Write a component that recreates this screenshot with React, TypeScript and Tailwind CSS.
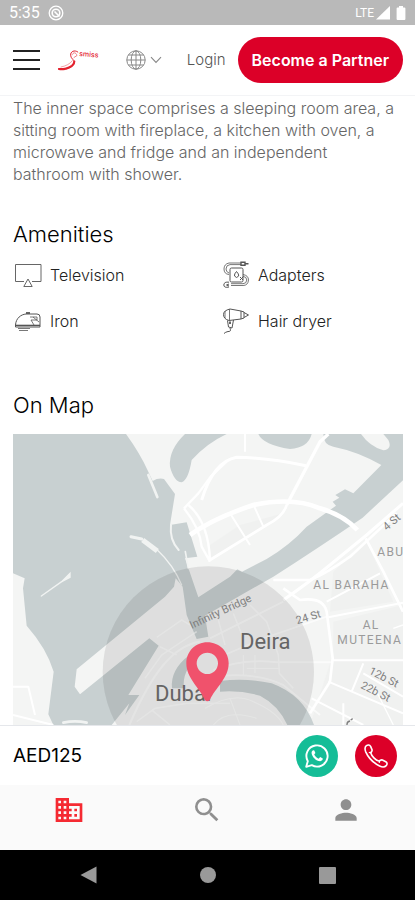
import type { ReactNode } from "react";
import { MdBusiness, MdPerson, MdSearch } from "react-icons/md";

const StatusBar = () => (
  <div className="flex h-[25px] items-center justify-between bg-[#b9b9b9] px-[9px] text-white">
    <div className="flex items-center gap-2">
      <span className="font-['Roboto'] text-base leading-6">5:35</span>
      <svg viewBox="0 0 16 16" className="h-4 w-4" fill="none" stroke="currentColor">
        <circle cx="8" cy="8" r="6.8" strokeWidth="1.3" />
        <circle cx="8" cy="8" r="3.8" strokeWidth="1.6" />
        <path d="M6.5 6.5 L11.5 11.5" strokeWidth="1.6" />
      </svg>
    </div>
    <div className="flex items-center gap-[2px]">
      <span className="font-['Roboto'] text-xs">LTE</span>
      <svg viewBox="0 0 14 14" className="h-[14px] w-[14px]" fill="currentColor">
        <path d="M14 0 V13.5 H0 Z" />
      </svg>
      <svg viewBox="0 0 10 14" className="ml-1 h-[14px] w-[10px]" fill="currentColor">
        <path d="M3 0 H7 V1.6 H8.4 Q9.4 1.6 9.4 2.6 V13 Q9.4 14 8.4 14 H1.6 Q.6 14 .6 13 V2.6 Q.6 1.6 1.6 1.6 H3 Z" />
      </svg>
    </div>
  </div>
);

const Logo = () => (
  <svg viewBox="0 0 42 24" className="h-6 w-[42px]" fill="none" stroke="#e3222f" strokeLinecap="round">
    <path d="M1.5 21 C8 22 17 19.5 17.5 14.5 C17.8 12 14 11 13.6 7.5 C13.2 3.5 17.5 1.5 20.8 4" strokeWidth="1" />
    <path d="M2 21 C9 22 17 18.5 17.3 13.5" strokeWidth="2.2" strokeDasharray="6 1" />
    <path d="M15 7 C16 4 19 4 20 7.5 L17 9.5" strokeWidth="0.8" opacity="0.7" />
    <path d="M4 19 C9 18 13 16 15.5 12.5" strokeWidth="0.7" opacity="0.6" />
    <text
      x="22"
      y="8"
      fill="#e3222f"
      stroke="none"
      fontFamily="Inter, sans-serif"
      fontSize="7"
      fontWeight="500"
      transform="rotate(5 22 8)"
    >
      smiss
    </text>
  </svg>
);

const Header = () => (
  <header className="flex h-[71px] items-center border-b border-gray-100 bg-white pl-[13px] pr-3">
    <button aria-label="Menu" className="flex w-[27px] flex-col gap-[7px]">
      <span className="h-[2px] w-full bg-[#222]" />
      <span className="h-[2px] w-full bg-[#222]" />
      <span className="h-[2px] w-full bg-[#222]" />
    </button>
    <a href="#" aria-label="Home" className="ml-[17px]">
      <Logo />
    </a>
    <button aria-label="Language" className="ml-[27px] flex items-center gap-1 text-[#888]">
      <svg viewBox="0 0 20 20" className="h-5 w-5" fill="none" stroke="currentColor" strokeWidth="1">
        <circle cx="10" cy="10" r="9.2" />
        <ellipse cx="10" cy="10" rx="4.8" ry="9.2" />
        <path d="M10 .8 V19.2 M.8 10 H19.2 M2.5 5 H17.5 M2.5 15 H17.5" />
      </svg>
      <svg viewBox="0 0 12 8" className="h-2 w-3" fill="none" stroke="currentColor" strokeWidth="1.1">
        <path d="M1 1.2 L6 6.4 L11 1.2" />
      </svg>
    </button>
    <a href="#" className="ml-auto text-[15px] font-light text-[#555]">
      Login
    </a>
    <button className="ml-3 h-[46px] rounded-full bg-[#dc0028] px-[14px] text-base font-semibold whitespace-nowrap text-white">
      Become a Partner
    </button>
  </header>
);

const TvIcon = () => (
  <svg viewBox="0 0 28 28" className="h-7 w-7" fill="none" stroke="#666" strokeWidth="1">
    <path d="M10 20.5 H1.5 V3.5 H27 V20.5 H18" />
    <path d="M14 18 L9.8 25.5 H18.2 Z" />
  </svg>
);

const IronIcon = () => (
  <svg viewBox="0 0 28 28" className="h-7 w-7" fill="none" stroke="#555" strokeWidth="1">
    <path d="M1.5 18 C2 11 7 7.5 12 7 H23 Q26 7 26 10 V20 H1.5 Z" />
    <path d="M1.5 18.4 H26" strokeWidth="1.4" />
    <path d="M12 6 H16" strokeWidth="1.8" />
    <path d="M16 10 H23 V13 H17 M17 13 L20 18 M19 10 L25 15" strokeWidth=".8" />
    <path d="M4 21.5 H16 M5 23.5 H14" strokeWidth=".8" />
  </svg>
);

const AdapterIcon = () => (
  <svg viewBox="0 0 28 28" className="h-7 w-7" fill="none" stroke="#555" strokeWidth="1">
    <rect x="8" y="7" width="13" height="14" rx="1.5" />
    <path d="M19 2 H7 Q2 3 2 8 Q2 13 7 13.5 M19 3.6 H8 Q4 4 4 8 Q4 11 7 12" strokeWidth=".8" />
    <path d="M19 1.3 H23 V4.2 H19 Z M23 2.7 H26.5" strokeWidth="1.4" />
    <path d="M14.5 10.5 Q12 13 12.5 15 Q14.5 18 16.7 15 Q17 13 14.5 10.5 Z" />
    <path d="M21 13.5 Q26.5 14.5 26.5 19 Q26 24.5 21 24.5 H9 M21 15.2 Q24.8 16 24.8 19 Q24.5 22.7 21 22.7 H9" strokeWidth=".8" />
    <path d="M7 21.2 Q2 20.5 1.8 24 Q2 27.2 7 26 M7 23 L4.5 24 L7 25" />
    <path d="M18 16 L21 19 M18 19 L21 16" />
  </svg>
);

const DryerIcon = () => (
  <svg viewBox="0 0 28 28" className="h-7 w-7" fill="none" stroke="#555" strokeWidth="1">
    <path d="M8 2 Q1.5 3.5 1.5 7.5 Q1.5 12 7 13.5 L19 12 V4 Z" />
    <path d="M7.5 2.2 V13.2 M3 4 V11" strokeWidth=".8" />
    <path d="M19 4 L22 5 V11 L19 12 M22 5.5 L26.5 8 L22 10.5" />
    <path d="M5.5 13.5 L6.5 20 L10 21 L11.5 13" />
    <path d="M8 14.5 V17" strokeWidth="1.8" />
    <path d="M8 21 Q9.5 25 6 24.5 Q3.5 25 2 26.5" />
  </svg>
);

const amenities: { label: string; icon: ReactNode }[] = [
  { label: "Television", icon: <TvIcon /> },
  { label: "Adapters", icon: <AdapterIcon /> },
  { label: "Iron", icon: <IronIcon /> },
  { label: "Hair dryer", icon: <DryerIcon /> },
];

const LocationMap = () => (
  <svg
    viewBox="39 27 1170 873"
    preserveAspectRatio="xMidYMin slice"
    className="block h-[291px] w-full font-['Roboto']"
    role="img"
    aria-label="Map of Dubai"
  >
    <rect x="0" y="0" width="1300" height="920" fill="#f4f5f4" />

    {/* districts */}
    <g fill="#f0f1f0">
      <path d="M630 360 L720 300 L850 265 L800 300 L625 408 Z" />
      <path d="M1000 440 L1100 350 L1180 530 L990 560 Z" />
      <path d="M1000 590 L1209 540 V700 H1000 Z" />
      <path d="M995 700 H1209 V900 H930 Z" />
    </g>

    {/* sea and creek */}
    <g fill="#c8d0d1">
      <path d="M39 27 H378 Q420 85 445 140 L458 168 Q475 158 492 162 L525 207 L510 300 L560 292 L592 395 L555 400 L595 517 L690 455 L712 433 L726 440 L800 402 Q870 360 920 305 L1008 242 L998 230 L1018 218 L1006 210 L1035 193 L1060 205 L1144 120 Q1075 80 1000 65 Q970 60 970 27 H1210 V165 L1088 278 Q950 372 820 455 L615 572 L625 635 L590 642 L560 570 L548 485 L527 460 L522 485 L495 515 L230 733 L224 785 L240 808 L448 640 L476 662 L385 810 L418 810 L375 870 L388 835 L335 900 H160 L145 868 L161 740 Q140 670 80 602 L69 490 L74 460 L39 445 Z" />
      <path d="M555 27 Q505 75 510 125 Q522 170 545 172 Q565 165 575 105 Q620 55 680 27 Z" />
      <path d="M775 27 Q790 60 870 72 Q925 68 935 27 Z" />
      <path d="M568 690 Q510 735 516 790 H552 Q545 740 590 700 Z" />
      <path d="M660 768 Q740 758 815 775 Q910 810 942 900 H862 Q835 840 780 812 Q720 795 660 800 Z" />
    </g>
    <path d="M1083 27 Q1110 65 1150 76 Q1178 72 1165 45 L1150 27 Z" fill="#f4f5f4" />

    {/* breakwaters */}
    <g fill="none" stroke="#f1f3f2" strokeLinecap="round">
      <path d="M445 150 L472 216" strokeWidth="8" />
      <path d="M393 335 L425 342" strokeWidth="9" />
      <path d="M428 345 L472 378" strokeWidth="15" strokeLinecap="butt" />
      <path d="M472 375 Q520 420 545 480" strokeWidth="4" />
      <path d="M513 300 Q508 345 536 375" strokeWidth="6" />
      <path d="M124 513 L185 470" strokeWidth="4" />
      <path d="M185 470 L210 445 V457 Z" fill="#f1f3f2" strokeWidth="4" />
      <path d="M556 380 L565 430" strokeWidth="5" />
      <path d="M190 893 Q225 885 260 893" strokeWidth="8" />
    </g>

    {/* main roads */}
    <g fill="none" stroke="#fff" strokeLinejoin="round">
      <path d="M570 330 Q640 280 760 240 Q880 215 960 250 Q1030 270 1072 315" strokeWidth="14" />
      <path d="M860 240 L960 50 L985 27" strokeWidth="10" />
      <path d="M605 225 Q640 110 710 97 Q800 98 918 122" strokeWidth="9" />
      <path d="M860 240 Q850 275 800 300 L625 408" strokeWidth="8" />
      <path d="M690 265 L750 360 M763 245 L790 305 M735 27 V80" strokeWidth="6" />
      <path d="M552 250 L595 205 L632 155 L680 110" strokeWidth="7" />
      <path d="M552 250 Q600 310 605 365 L630 410 M565 240 Q625 290 630 405" strokeWidth="7" />
      <path d="M1209 235 L1100 330 L990 420 Q930 470 850 525" strokeWidth="9" />
      <path d="M1190 265 L1050 395 Q980 445 930 465 H820" strokeWidth="8" />
      <path d="M1097 340 L1150 440 L1209 560" strokeWidth="8" />
      <path d="M850 490 L900 525 Q970 515 980 560 L998 700 L990 770 L930 865" strokeWidth="8" />
      <path d="M980 530 L1140 445 M985 577 L1209 533 M998 706 H1209" strokeWidth="6" />
      <path d="M985 770 L1209 865 M935 820 L1090 900 M1090 715 L1055 800 M1030 835 V900 M1090 745 L1209 815" strokeWidth="6" />
      <path d="M1209 600 L1180 610 M1120 780 L1180 900" strokeWidth="4" />
      <path d="M39 785 H85 L105 870 M39 870 L160 900" strokeWidth="6" />
    </g>

    {/* old town streets */}
    <g fill="none" stroke="#fff" opacity=".65">
      <path d="M470 637 L545 585 L570 600 M480 665 L530 690 M435 760 L485 690 L590 620" strokeWidth="5" />
      <path d="M388 900 Q440 780 490 720 Q540 660 600 650" strokeWidth="7" />
      <path d="M410 890 L465 850 L560 835 H690 M455 855 L510 900" strokeWidth="5" />
      <path d="M630 640 L740 585 L850 530 M650 700 L790 640 L980 575" strokeWidth="6" />
      <path d="M640 735 Q730 700 830 712 H1000 M640 755 Q770 740 850 780 L960 870" strokeWidth="6" />
      <path d="M750 540 L800 590 L835 690 L838 745 L880 790 M700 565 L730 640 M655 585 L675 660" strokeWidth="5" />
      <path d="M730 690 V750 M765 690 V745 M740 730 H840" strokeWidth="4" />
      <path d="M615 850 Q700 800 760 830 Q830 860 850 900 M640 900 Q680 850 770 880 M690 820 L720 900" strokeWidth="4" />
    </g>

    <circle cx="625" cy="741" r="317" fill="#000" opacity=".09" />

    <g fill="#9a9a9a">
      <text x="940" y="493" fontSize="36" letterSpacing="4">AL BARAHA</text>
      <text x="1132" y="392" fontSize="36" letterSpacing="4">ABU</text>
      <text x="1088" y="613" fontSize="36" letterSpacing="4">AL</text>
      <text x="1012" y="656" fontSize="36" letterSpacing="4">MUTEENA</text>
    </g>
    <g fill="#808080" fontSize="33">
      <text transform="translate(575 612) rotate(-25)">Infinity Bridge</text>
      <text transform="translate(892 598) rotate(-17)">24 St</text>
      <text transform="translate(1160 318) rotate(-40)">4 St</text>
      <text transform="translate(1105 745) rotate(27)">12b St</text>
      <text transform="translate(1080 788) rotate(27)">22b St</text>
    </g>
    <path d="M1041 900 Q1040 890 1050 888 M1052 885 L1058 881" fill="none" stroke="#808080" strokeWidth="4" />
    <g fill="#646464" fontSize="66">
      <text x="465" y="827">Dubai</text>
      <text x="720" y="671">Deira</text>
    </g>

    {/* pin */}
    <path
      d="M622 652 C586 652 559 680 559 715 C559 760 600 790 614 824 Q622 834 630 824 C645 790 686 760 686 715 C686 680 658 652 622 652 Z M622 683 A32 32 0 1 1 622 747 A32 32 0 1 1 622 683 Z"
      fill="#f0526c"
      fillRule="evenodd"
    />
  </svg>
);

const BookingBar = () => (
  <div className="flex h-[60px] items-center border-t border-gray-200 bg-white pl-[13px] pr-[18px]">
    <span className="text-[19px] leading-8 text-black">AED125</span>
    <a
      href="#"
      aria-label="WhatsApp"
      className="ml-auto flex h-[42px] w-[42px] items-center justify-center rounded-full bg-[#15bd97] text-white"
    >
      <svg viewBox="0 0 24 24" className="h-6 w-6" fill="none" stroke="currentColor">
        <path d="M1.2 22.8 L2.8 17.2 A10.6 10.6 0 1 1 6.8 21.2 Z" strokeWidth="1.9" strokeLinejoin="round" />
        <path
          d="M8.4 6.2 C7.4 6.2 6.4 7.6 6.6 9.2 C7.2 13 11 17 15.2 17.2 C16.8 17.1 17.9 16 17.8 14.6 L15.2 13.1 L13.6 14.7 C11.8 14 10 12.3 9.2 10.4 L10.4 9 L9.3 6.4 Z"
          fill="currentColor"
          stroke="none"
        />
      </svg>
    </a>
    <a
      href="#"
      aria-label="Call"
      className="ml-[17px] flex h-[42px] w-[42px] items-center justify-center rounded-full bg-[#dc0028] text-white"
    >
      <svg viewBox="0 0 24 24" className="h-6 w-6" fill="none" stroke="currentColor" strokeWidth="1.6" strokeLinejoin="round">
        <path d="M2.4 1.6 C4 .6 5.6 .8 6.6 2.4 L8 5.6 C8.6 7.2 7 8 6.8 9 C7.6 12 11.6 16.2 14.8 17 C16 16.8 16.8 15.4 18.4 16 L21.8 17.8 C23.4 18.8 23.4 20.4 22.2 21.6 C20.6 23.4 18 23.2 15.6 22 C9.6 19 4 13 1.6 7.6 C.8 5.2 .8 2.8 2.4 1.6 Z" />
        <path d="M4.8 8.6 L7 8.4 M15.2 18.8 L15.6 16.6" strokeWidth="1.2" />
      </svg>
    </a>
  </div>
);

const TabBar = () => (
  <nav className="grid h-[65px] grid-cols-3 bg-[#fafafa] pt-[9px] text-[#8f8f8f]">
    <a href="#" aria-label="Properties" className="flex justify-center text-[#f52a32]">
      <MdBusiness size={32} />
    </a>
    <a href="#" aria-label="Search" className="flex justify-center">
      <MdSearch size={32} />
    </a>
    <a href="#" aria-label="Profile" className="flex justify-center">
      <MdPerson size={32} />
    </a>
  </nav>
);

const SystemNav = () => (
  <div className="flex h-[50px] items-center justify-center gap-[103px] bg-black">
    <button aria-label="Back">
      <svg viewBox="0 0 17 18" className="h-[18px] w-[17px]" fill="#999">
        <path d="M16.5 .5 V17.5 L.5 9 Z" />
      </svg>
    </button>
    <button aria-label="Home screen" className="h-4 w-4 rounded-full bg-[#999]" />
    <button aria-label="Recent apps" className="h-[17px] w-[17px] rounded-[1px] bg-[#999]" />
  </div>
);

export default function App() {
  return (
    <div className="flex min-h-screen flex-col bg-white font-['Inter',sans-serif]">
      <StatusBar />
      <Header />

      <main className="flex-1 pt-px pl-[13px] pr-3">
        <p className="pr-2 text-base leading-[22px] font-light text-[#666]">
          The inner space comprises a sleeping room area, a sitting room with fireplace, a kitchen
          with oven, a microwave and fridge and an independent bathroom with shower.
        </p>

        <h2 className="mt-[33px] text-[22px] leading-8 font-light text-black">Amenities</h2>
        <ul className="mt-[11px] grid grid-cols-2 gap-x-[26px] gap-y-[18px]">
          {amenities.map((item) => (
            <li key={item.label} className="flex items-center gap-2 pl-px text-base font-light text-[#222]">
              {item.icon}
              {item.label}
            </li>
          ))}
        </ul>

        <h2 className="mt-[54px] mb-[13px] text-[22px] leading-8 font-light text-black">On Map</h2>
        <LocationMap />
      </main>

      <BookingBar />
      <TabBar />
      <SystemNav />
    </div>
  );
}
